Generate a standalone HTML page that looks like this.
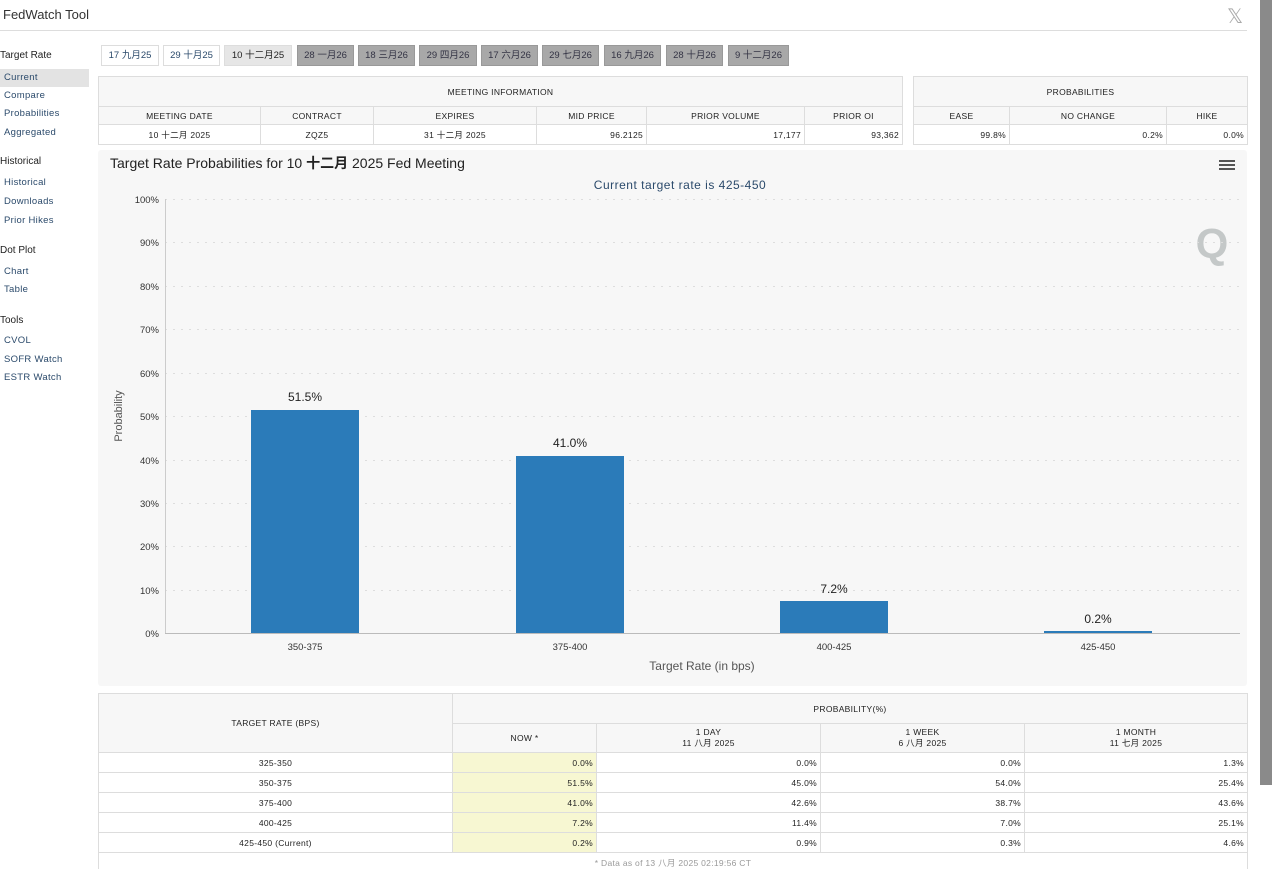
<!DOCTYPE html>
<html><head><meta charset="utf-8"><style>
*{margin:0;padding:0;box-sizing:border-box}
body{width:1272px;height:869px;overflow:hidden;background:#fff;font-family:"Liberation Sans","Noto Sans CJK SC",sans-serif;color:#222;position:relative}
.a{position:absolute}
.title{left:3px;top:7px;font-size:13px;color:#333}
.hr{left:0;top:30px;width:1247px;height:1px;background:#ddd}
.sb{position:absolute;left:1260px;top:0;width:12px;height:785px;background:#8a8a8a}
.sh{position:absolute;left:0;font-size:10px;color:#222}
.si{position:absolute;left:0;width:89px;height:18px;padding-left:4px;font-size:9.5px;line-height:18px;color:#2b4a6b;letter-spacing:.3px}
.tab{position:absolute;top:45px;height:21px;font-size:9.5px;line-height:20px;text-align:center;border:1px solid #ddd;color:#2b4a6b}
.tab.g{background:#a8a8a8;border-color:#999;color:#334}
table{border-collapse:collapse;position:absolute;font-size:8.5px;letter-spacing:.3px}
td{border:1px solid #ddd;text-align:center;color:#222;padding:0 3px}
.r{text-align:right}
.hd td{background:#f7f7f7}
.y{background:#f7f7d2}
</style></head><body>
<div class="a title">FedWatch Tool</div>
<div class="a" style="left:1227px;top:4px;font-size:20px;color:#aaa;font-family:'Liberation Serif',serif">𝕏</div>
<div class="a hr"></div>
<div class="sb"></div>
<div class="sh" style="top:50px">Target Rate</div>
<div class="si" style="top:69px;background:#e3e3e3">Current</div>
<div class="si" style="top:87px">Compare</div>
<div class="si" style="top:105px">Probabilities</div>
<div class="si" style="top:124px">Aggregated</div>
<div class="sh" style="top:156px">Historical</div>
<div class="si" style="top:174px">Historical</div>
<div class="si" style="top:193px">Downloads</div>
<div class="si" style="top:212px">Prior Hikes</div>
<div class="sh" style="top:245px">Dot Plot</div>
<div class="si" style="top:263px">Chart</div>
<div class="si" style="top:281px">Table</div>
<div class="sh" style="top:315px">Tools</div>
<div class="si" style="top:332px">CVOL</div>
<div class="si" style="top:351px">SOFR Watch</div>
<div class="si" style="top:369px">ESTR Watch</div>

<div class="tab" style="left:101px;width:58px">17 九月25</div>
<div class="tab" style="left:163px;width:57px">29 十月25</div>
<div class="tab" style="left:224px;width:68px;background:#e6e6e6;color:#222">10 十二月25</div>
<div class="tab g" style="left:297px;width:57px">28 一月26</div>
<div class="tab g" style="left:358px;width:57px">18 三月26</div>
<div class="tab g" style="left:419px;width:58px">29 四月26</div>
<div class="tab g" style="left:481px;width:57px">17 六月26</div>
<div class="tab g" style="left:542px;width:57px">29 七月26</div>
<div class="tab g" style="left:604px;width:57px">16 九月26</div>
<div class="tab g" style="left:666px;width:57px">28 十月26</div>
<div class="tab g" style="left:728px;width:61px">9 十二月26</div>

<table style="left:98px;top:76px;width:805px">
<tr class="hd" style="height:30px"><td colspan="6">MEETING INFORMATION</td></tr>
<tr class="hd" style="height:18px"><td style="width:162px">MEETING DATE</td><td style="width:113px">CONTRACT</td><td style="width:163px">EXPIRES</td><td style="width:110px">MID PRICE</td><td style="width:158px">PRIOR VOLUME</td><td>PRIOR OI</td></tr>
<tr style="height:20px"><td>10 十二月 2025</td><td>ZQZ5</td><td>31 十二月 2025</td><td class="r">96.2125</td><td class="r">17,177</td><td class="r">93,362</td></tr>
</table>
<table style="left:913px;top:76px;width:335px">
<tr class="hd" style="height:30px"><td colspan="3">PROBABILITIES</td></tr>
<tr class="hd" style="height:18px"><td style="width:96px">EASE</td><td style="width:157px">NO CHANGE</td><td>HIKE</td></tr>
<tr style="height:20px"><td class="r">99.8%</td><td class="r">0.2%</td><td class="r">0.0%</td></tr>
</table>

<svg class="a" style="left:98px;top:150px" width="1149" height="536" viewBox="98 150 1149 536">
<rect x="98" y="150" width="1149" height="536" fill="#f7f7f7" rx="3"/>
<text x="110" y="168" font-size="14" fill="#222" font-family="Liberation Sans, Noto Sans CJK SC, sans-serif">Target Rate Probabilities for 10 <tspan font-weight="bold">十二月</tspan> 2025 Fed Meeting</text>
<text x="680" y="189" font-size="12" fill="#2b4a6b" text-anchor="middle" font-family="Liberation Sans, sans-serif" letter-spacing=".5">Current target rate is 425-450</text>
<g fill="#555"><rect x="1219" y="160" width="16" height="2"/><rect x="1219" y="164" width="16" height="2"/><rect x="1219" y="168" width="16" height="2"/></g>
<text x="1212" y="258" font-size="42" font-weight="bold" fill="#c4c8c8" text-anchor="middle" font-family="Liberation Sans, sans-serif">Q</text>
<g stroke="#ddd" stroke-dasharray="2,6" stroke-width="1">
<line x1="165" x2="1240" y1="199.5" y2="199.5"/><line x1="165" x2="1240" y1="242.5" y2="242.5"/><line x1="165" x2="1240" y1="286.5" y2="286.5"/><line x1="165" x2="1240" y1="329.5" y2="329.5"/><line x1="165" x2="1240" y1="373.5" y2="373.5"/><line x1="165" x2="1240" y1="416.5" y2="416.5"/><line x1="165" x2="1240" y1="460.5" y2="460.5"/><line x1="165" x2="1240" y1="503.5" y2="503.5"/><line x1="165" x2="1240" y1="546.5" y2="546.5"/><line x1="165" x2="1240" y1="590.5" y2="590.5"/>
</g>
<line x1="165.5" x2="165.5" y1="199" y2="633" stroke="#ccc"/>
<line x1="165" x2="1240" y1="633.5" y2="633.5" stroke="#bbb"/>
<g font-size="9.5" fill="#333" text-anchor="end" font-family="Liberation Sans, sans-serif">
<text x="159" y="203">100%</text><text x="159" y="246">90%</text><text x="159" y="290">80%</text><text x="159" y="333">70%</text><text x="159" y="377">60%</text><text x="159" y="420">50%</text><text x="159" y="464">40%</text><text x="159" y="507">30%</text><text x="159" y="550">20%</text><text x="159" y="594">10%</text><text x="159" y="637">0%</text>
</g>
<text transform="translate(122,416) rotate(-90)" font-size="11" fill="#555" text-anchor="middle" font-family="Liberation Sans, sans-serif">Probability</text>
<g fill="#2b7bb9">
<rect x="251" y="410" width="108" height="223"/><rect x="516" y="456" width="108" height="177"/><rect x="780" y="601" width="108" height="32"/><rect x="1044" y="631" width="108" height="2"/>
</g>
<g font-size="12" fill="#222" text-anchor="middle" font-family="Liberation Sans, sans-serif">
<text x="305" y="401">51.5%</text><text x="570" y="447">41.0%</text><text x="834" y="593">7.2%</text><text x="1098" y="623">0.2%</text>
</g>
<g font-size="9.5" fill="#333" text-anchor="middle" font-family="Liberation Sans, sans-serif">
<text x="305" y="650">350-375</text><text x="570" y="650">375-400</text><text x="834" y="650">400-425</text><text x="1098" y="650">425-450</text>
</g>
<text x="702" y="670" font-size="12" fill="#555" text-anchor="middle" font-family="Liberation Sans, sans-serif">Target Rate (in bps)</text>
</svg>

<table style="left:98px;top:693px;width:1150px">
<tr class="hd" style="height:30px"><td rowspan="2" style="width:354px">TARGET RATE (BPS)</td><td colspan="4">PROBABILITY(%)</td></tr>
<tr class="hd" style="height:29px"><td style="width:144px">NOW *</td><td style="width:224px">1 DAY<br>11 八月 2025</td><td style="width:204px">1 WEEK<br>6 八月 2025</td><td>1 MONTH<br>11 七月 2025</td></tr>
<tr style="height:20px"><td>325-350</td><td class="r y">0.0%</td><td class="r">0.0%</td><td class="r">0.0%</td><td class="r">1.3%</td></tr>
<tr style="height:20px"><td>350-375</td><td class="r y">51.5%</td><td class="r">45.0%</td><td class="r">54.0%</td><td class="r">25.4%</td></tr>
<tr style="height:20px"><td>375-400</td><td class="r y">41.0%</td><td class="r">42.6%</td><td class="r">38.7%</td><td class="r">43.6%</td></tr>
<tr style="height:20px"><td>400-425</td><td class="r y">7.2%</td><td class="r">11.4%</td><td class="r">7.0%</td><td class="r">25.1%</td></tr>
<tr style="height:20px"><td>425-450 (Current)</td><td class="r y">0.2%</td><td class="r">0.9%</td><td class="r">0.3%</td><td class="r">4.6%</td></tr>
<tr style="height:16px"><td colspan="5" style="border-bottom:none;color:#999;vertical-align:bottom">* Data as of 13 八月 2025 02:19:56 CT</td></tr>
</table>
</body></html>
